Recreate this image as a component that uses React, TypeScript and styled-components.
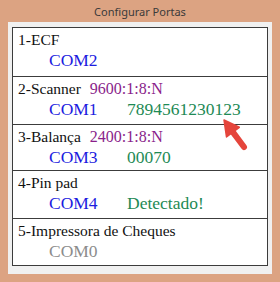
import styled, { createGlobalStyle } from "styled-components";

interface Port {
  id: number;
  name: string;
  baud?: string;
  com: string;
  value?: string;
  disabled?: boolean;
  height: number;
}

const ports: Port[] = [
  { id: 1, name: "ECF", com: "COM2", height: 49 },
  { id: 2, name: "Scanner", baud: "9600:1:8:N", com: "COM1", value: "7894561230123", height: 48 },
  { id: 3, name: "Balança", baud: "2400:1:8:N", com: "COM3", value: "00070", height: 46 },
  { id: 4, name: "Pin pad", com: "COM4", value: "Detectado!", height: 48 },
  { id: 5, name: "Impressora de Cheques", com: "COM0", disabled: true, height: 46 },
];

export default function App() {
  return (
    <>
      <GlobalStyle />
      <Window>
        <TitleBar>Configurar Portas</TitleBar>
        <Client>
          <Panel>
            {ports.map((port) => (
              <Row key={port.id} $h={port.height}>
                <Line>
                  <Label>
                    {port.id}-{port.name}
                  </Label>
                  {port.baud && <Baud>{port.baud}</Baud>}
                </Line>
                <Line>
                  <Com $disabled={port.disabled}>{port.com}</Com>
                  {port.value && <Value>{port.value}</Value>}
                </Line>
              </Row>
            ))}
          </Panel>
          <Arrow width="40" height="40" viewBox="0 0 40 40">
            <line x1="18.9" y1="18.1" x2="30" y2="33" stroke="#e5453c" strokeWidth="6" strokeLinecap="round" />
            <polygon points="10,6 12.5,22.9 25.3,13.3" fill="#e5453c" stroke="#e5453c" strokeWidth="1.5" strokeLinejoin="round" />
          </Arrow>
        </Client>
      </Window>
    </>
  );
}

const GlobalStyle = createGlobalStyle`
  html, body {
    margin: 0;
    padding: 0;
  }
`;

const Window = styled.div`
  width: 280px;
  height: 282px;
  box-sizing: border-box;
  background-color: #dca382;
  padding: 0 8px 8px;
  display: flex;
  flex-direction: column;
`;

const TitleBar = styled.div`
  height: 22px;
  display: flex;
  align-items: center;
  justify-content: center;
  font-family: "Noto Sans", sans-serif;
  font-size: 11px;
  color: #3a3a3a;
`;

const Client = styled.div`
  flex: 1;
  position: relative;
  background-color: #f0f0f0;
  padding: 5px 4px;
  box-sizing: border-box;
`;

const Panel = styled.div`
  background-color: #fff;
  border: 1px solid #3c3c3c;
  display: flex;
  flex-direction: column;
  font-family: "Liberation Serif", "Times New Roman", serif;
  font-size: 15.5px;
`;

const Row = styled.div<{ $h: number }>`
  height: ${(p) => p.$h}px;
  box-sizing: border-box;
  padding: 2px 0 0 5px;
  border-bottom: 1px solid #3c3c3c;

  &:last-child {
    border-bottom: none;
  }
`;

const Line = styled.div`
  display: flex;
  align-items: baseline;
  line-height: 20px;
  white-space: nowrap;
`;

const Label = styled.span`
  color: #111;
`;

const Baud = styled.span`
  color: #8a1e8a;
  margin-left: 9px;
  font-size: 16px;
`;

const Com = styled.span<{ $disabled?: boolean }>`
  color: ${(p) => (p.$disabled ? "#8c8c8c" : "#1c1ce0")};
  margin-left: 31px;
  width: 78px;
  font-size: 17.5px;
`;

const Value = styled.span`
  color: #1e8a55;
  font-size: 17.5px;
`;

const Arrow = styled.svg`
  position: absolute;
  left: 206px;
  top: 92px;
`;
